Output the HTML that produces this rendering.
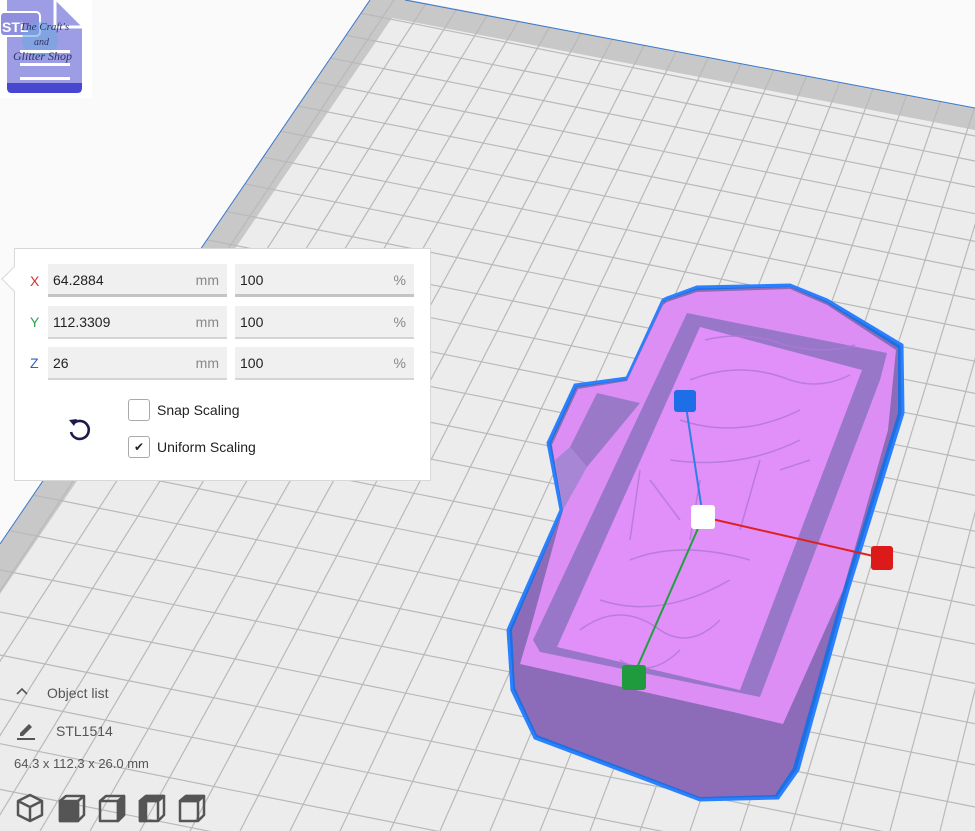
<!DOCTYPE html>
<html><head><meta charset="utf-8">
<style>
*{margin:0;padding:0;box-sizing:border-box}
html,body{width:975px;height:831px;overflow:hidden}
body{background:#fafafa;font-family:"Liberation Sans",sans-serif;position:relative}
#bg{position:absolute;left:0;top:0}
.panel{position:absolute;left:14px;top:248px;width:417px;height:233px;background:#fff;border:1px solid #d8d8d8}
.notch{position:absolute;left:5px;top:270px;width:18px;height:18px;background:#fff;border-left:1px solid #d8d8d8;border-bottom:1px solid #d8d8d8;transform:rotate(45deg)}
.lab{position:absolute;left:30px;font-size:14px}
.f{position:absolute;height:33px;background:#f0f0f0;border-bottom:2px solid #d4d4d4;font-size:14px;color:#222;line-height:32px;padding-left:5px}
.f span{position:absolute;right:8px;top:0;color:#888}
.cb{position:absolute;left:128px;width:22px;height:22px;border:1px solid #aaa;border-radius:3px;background:#fff;font-size:12px;text-align:center;line-height:20px;color:#222}
.ct{position:absolute;left:157px;font-size:14px;color:#222}
.t{position:absolute;color:#555;font-size:14px}
</style></head><body>
<svg id="bg" width="975" height="831" viewBox="0 0 975 831">
<defs><clipPath id="pl"><polygon points="370,0 410,0 975,108 975,831 0,831 0,544"/></clipPath></defs>
<polygon points="370,0 410,0 975,108 975,831 0,831 0,544" fill="#ececec"/>
<g clip-path="url(#pl)">
<polygon points="370,0 410,0 975,108 975,130 392,18 0,594 0,544" fill="#c8c8c8"/>
<g id="grid" stroke="#b9b9b9" stroke-width="1.2"></g>
</g>
<polyline points="370,0 0,544" stroke="#3a78d0" fill="none" stroke-width="1"/>
<polyline points="405,0 975,108" stroke="#3a78d0" fill="none" stroke-width="1"/>

<!-- object -->
<polygon points="667,298 697,287 790,285 827,300 902,345 903,413 848,590 798,770 778,798 700,800 535,738 512,690 508,630 561,510 548,443 575,385 627,378 663,300" fill="#1e6fe0" stroke="#2a80ff" stroke-width="3"/>
<polygon points="667,300 697,290 790,287 827,303 898,348 898,413 843,590 793,768 775,795 700,797 537,735 515,688 512,630 563,510 551,443 577,387 627,380 663,303" fill="#8c6bb8"/>
<polygon points="667,302 697,292 790,289 827,305 896,350 888,430 843,590 783,724 733,712 520,664 530,630 563,510 552,445 578,389 627,381 663,305" fill="#dc8ef5"/>
<polygon points="687,313 887,353 880,380 760,697 540,652 533,640" fill="#9877c8"/>
<polygon points="700,327 862,370 740,690 557,647" fill="#e090f8"/>
<polygon points="597,393 640,403 587,467 570,447" fill="#9a7ac8"/>
<polygon points="563,510 587,467 570,447 555,460" fill="#a886d6"/>
<g fill="none" stroke="#b078d6" stroke-width="1.5" opacity="0.8">
<path d="M705,340 q40,-10 80,5 q40,10 70,0"/><path d="M690,380 q50,-20 100,0 q30,10 60,-5"/><path d="M680,420 q60,20 120,-10"/><path d="M670,460 q70,10 130,-20"/>
<path d="M640,470 l-10,70 M650,480 l30,40 M700,480 l-10,60 M760,460 l-20,70 M780,470 l30,-10"/>
<path d="M630,560 q50,-20 120,0"/><path d="M600,600 q60,20 130,-20"/><path d="M580,630 q40,-30 80,0 q30,20 60,-10"/><path d="M620,660 q30,20 60,-10"/>
</g>
<line x1="685" y1="400" x2="703" y2="517" stroke="#2f7fe6" stroke-width="2"/>
<line x1="703" y1="517" x2="882" y2="558" stroke="#e02020" stroke-width="2"/>
<line x1="703" y1="517" x2="633" y2="677" stroke="#20a040" stroke-width="2"/>
<rect x="674" y="390" width="22" height="22" rx="3" fill="#1e6ee8"/>
<rect x="691" y="505" width="24" height="24" rx="3" fill="#fff"/>
<rect x="871" y="546" width="22" height="24" rx="3" fill="#dd1a1a"/>
<rect x="622" y="665" width="24" height="25" rx="3" fill="#1f9a3c"/>
</svg>

<!-- logo -->
<div style="position:absolute;left:0;top:0;width:92px;height:98px;background:#fff"></div>
<svg style="position:absolute;left:0;top:0" width="92" height="98">
<path d="M7,0 H55 L82,27 V88 Q82,93 77,93 H12 Q7,93 7,88 Z" fill="#9d9de6"/>
<path d="M7,83 H82 V88 Q82,93 77,93 H12 Q7,93 7,88 Z" fill="#4747d0"/>
<path d="M55,0 V27 H82" fill="none" stroke="#fff" stroke-width="3"/>
<rect x="0" y="12" width="40" height="24" rx="4" fill="#8f8fdf" stroke="#fff" stroke-width="2"/>
<circle cx="40" cy="40" r="18" fill="#6fa6e0" opacity="0.6"/>
<rect x="20" y="50" width="50" height="3" fill="#fff"/><rect x="20" y="63" width="50" height="3" fill="#fff"/><rect x="20" y="77" width="50" height="3" fill="#fff"/>
<text x="2" y="32" font-family="Liberation Sans" font-weight="bold" font-size="14" fill="#fff">STL</text>
<text x="20" y="30" font-family="Liberation Serif" font-style="italic" font-size="11" fill="#333366">The Craft's</text>
<text x="34" y="45" font-family="Liberation Serif" font-style="italic" font-size="10" fill="#333366">and</text>
<text x="13" y="60" font-family="Liberation Serif" font-style="italic" font-size="12" fill="#333366">Glitter Shop</text>
</svg>

<!-- panel -->
<div class="panel"></div>
<div class="notch"></div>
<div style="position:absolute;left:15px;top:262px;width:20px;height:36px;background:#fff"></div>
<div class="lab" style="top:273px;color:#d03030">X</div>
<div class="lab" style="top:314px;color:#30a050">Y</div>
<div class="lab" style="top:355px;color:#3060c0">Z</div>
<div class="f" style="left:48px;top:264px;width:179px;border-bottom:3px solid #c4c4c4">64.2884<span>mm</span></div>
<div class="f" style="left:235px;top:264px;width:179px;border-bottom:3px solid #c4c4c4">100<span>%</span></div>
<div class="f" style="left:48px;top:306px;width:179px">112.3309<span>mm</span></div>
<div class="f" style="left:235px;top:306px;width:179px">100<span>%</span></div>
<div class="f" style="left:48px;top:347px;width:179px">26<span>mm</span></div>
<div class="f" style="left:235px;top:347px;width:179px">100<span>%</span></div>
<div class="cb" style="top:399px"></div>
<div class="ct" style="top:402px">Snap Scaling</div>
<div class="cb" style="top:436px">&#10004;</div>
<div class="ct" style="top:439px">Uniform Scaling</div>
<svg style="position:absolute;left:66px;top:416px" width="28" height="28" viewBox="0 0 28 28">
<path d="M7,8 A9,9 0 1 1 5,16" fill="none" stroke="#1c1c4a" stroke-width="2.6"/>
<path d="M3,4 L8,10 L11,3 Z" fill="#1c1c4a"/>
</svg>

<!-- bottom -->
<svg style="position:absolute;left:15px;top:686px" width="14" height="10"><path d="M2,8 L7,3 L12,8" fill="none" stroke="#555" stroke-width="1.6"/></svg>
<div class="t" style="left:47px;top:685px">Object list</div>
<svg style="position:absolute;left:16px;top:720px" width="20" height="20"><path d="M4,13 L13,4 L16,7 L7,16 L4,16 Z" fill="#555"/><rect x="1" y="18" width="18" height="2" fill="#555"/></svg>
<div class="t" style="left:56px;top:723px">STL1514</div>
<div class="t" style="left:14px;top:756px;font-size:13px">64.3 x 112.3 x 26.0 mm</div>
<svg style="position:absolute;left:16px;top:793px" width="195" height="30" viewBox="0 0 195 30" fill="none" stroke="#555" stroke-width="2.5" stroke-linejoin="round">
<path d="M14,2 L26,8 V22 L14,28 L2,22 V8 Z M2,8 L14,14 L26,8 M14,14 V28"/>
<g transform="translate(42,0)"><path d="M2,8 L8,3 H26 V22 L20,28 H2 Z M20,8 V28 M20,8 L26,3" /><path d="M2,8 H20 V28 H2 Z" fill="#555"/></g>
<g transform="translate(82,0)"><path d="M2,8 L8,3 H26 V22 L20,28 H2 Z M2,8 H20 V28 M20,8 L26,3"/><path d="M20,8 L26,3 V22 L20,28 Z" fill="#555"/></g>
<g transform="translate(122,0)"><path d="M2,8 L8,3 H26 V22 L20,28 H2 Z M2,8 H20 V28 M20,8 L26,3"/><path d="M2,8 L8,3 H26 L20,8 Z" fill="#555"/><path d="M2,8 H8 V28 H2Z" fill="#555"/></g>
<g transform="translate(162,0)"><path d="M2,8 L8,3 H26 V22 L20,28 H2 Z M2,8 H20 V28 M20,8 L26,3"/><path d="M2,8 L8,3 H26 L20,8 Z" fill="#555"/></g>
</svg>

<script>
(function(){
var g=document.getElementById('grid'),h='';
var y0=-59,s=25;
while(y0<900){h+='<line x1="0" y1="'+y0+'" x2="975" y2="'+(y0+195)+'"/>';y0+=s;s+=0.9;}
var vx=1592,vy=-1797;
for(var x=-160;x<1500;x+=50){h+='<line x1="'+vx+'" y1="'+vy+'" x2="'+x+'" y2="831"/>';}
g.innerHTML=h;
})();
</script>
</body></html>
